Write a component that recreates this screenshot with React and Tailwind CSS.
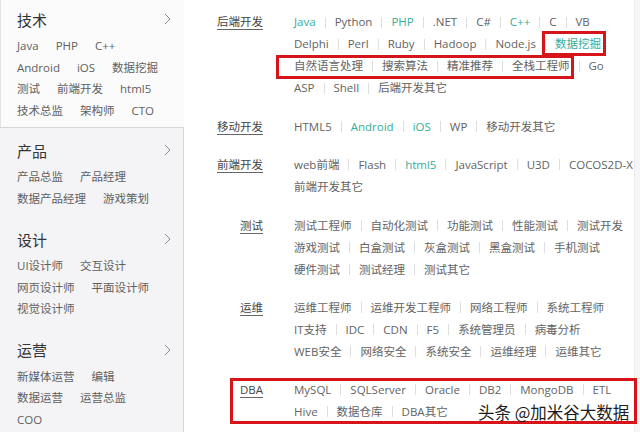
import React from "react";

const FONT = { fontFamily: "'Open Sans','Noto Sans CJK SC',sans-serif" };

const leftSections = [
  { title: "技术", rows: [["Java", "PHP", "C++"], ["Android", "iOS", "数据挖掘"], ["测试", "前端开发", "html5"], ["技术总监", "架构师", "CTO"]] },
  { title: "产品", rows: [["产品总监", "产品经理"], ["数据产品经理", "游戏策划"]] },
  { title: "设计", rows: [["UI设计师", "交互设计"], ["网页设计师", "平面设计师"], ["视觉设计师"]] },
  { title: "运营", rows: [["新媒体运营", "编辑"], ["数据运营", "运营总监"], ["COO"]] },
];

const T = (s) => [s, true];

const rightSections = [
  {
    label: "后端开发",
    rows: [
      [T("Java"), "Python", T("PHP"), ".NET", "C#", T("C++"), "C", "VB"],
      ["Delphi", "Perl", "Ruby", "Hadoop", "Node.js", T("数据挖掘")],
      ["自然语言处理", "搜索算法", "精准推荐", "全栈工程师", "Go"],
      ["ASP", "Shell", "后端开发其它"],
    ],
  },
  { label: "移动开发", rows: [["HTML5", T("Android"), T("iOS"), "WP", "移动开发其它"]] },
  {
    label: "前端开发",
    rows: [
      ["web前端", "Flash", T("html5"), "JavaScript", "U3D", "COCOS2D-X"],
      ["前端开发其它"],
    ],
  },
  {
    label: "测试",
    rows: [
      ["测试工程师", "自动化测试", "功能测试", "性能测试", "测试开发"],
      ["游戏测试", "白盒测试", "灰盒测试", "黑盒测试", "手机测试"],
      ["硬件测试", "测试经理", "测试其它"],
    ],
  },
  {
    label: "运维",
    rows: [
      ["运维工程师", "运维开发工程师", "网络工程师", "系统工程师"],
      ["IT支持", "IDC", "CDN", "F5", "系统管理员", "病毒分析"],
      ["WEB安全", "网络安全", "系统安全", "运维经理", "运维其它"],
    ],
  },
  {
    label: "DBA",
    rows: [
      ["MySQL", "SQLServer", "Oracle", "DB2", "MongoDB", "ETL"],
      ["Hive", "数据仓库", "DBA其它"],
    ],
  },
];

function Chevron() {
  return (
    <svg width="7" height="12" viewBox="0 0 7 12" className="shrink-0 -translate-y-[1px]">
      <polyline points="1,1 6,6 1,11" fill="none" stroke="#8a8a8a" strokeWidth="1" />
    </svg>
  );
}

function LeftSection({ title, rows }) {
  return (
    <div>
      <div className="flex h-6 items-center justify-between">
        <span className="text-[15px] text-[#333]">{title}</span>
        <Chevron />
      </div>
      <div className="mt-[3px]">
        {rows.map((r, i) => (
          <div key={i} className="flex h-[21.5px] items-center gap-[17px] whitespace-nowrap text-[11.5px] text-[#606060]">
            {r.map((t) => (
              <span key={t}>{t}</span>
            ))}
          </div>
        ))}
      </div>
    </div>
  );
}

function Row({ items }) {
  return (
    <div className="flex h-[22px] items-center whitespace-nowrap text-[11.5px]">
      {items.map((it, i) => {
        const [text, teal] = Array.isArray(it) ? it : [it, false];
        return (
          <React.Fragment key={i}>
            {i > 0 && <span className="mx-[9px] h-[11px] w-px bg-[#dedede]" />}
            <span className={teal ? "text-[#35ad9a]" : "text-[#636363]"}>{text}</span>
          </React.Fragment>
        );
      })}
    </div>
  );
}

export default function App() {
  return (
    <div className="relative flex h-[432px] w-[640px] overflow-hidden bg-white" style={FONT}>
      {/* left column */}
      <div className="flex w-[184px] shrink-0 flex-col">
        <div className="border-l border-[#e2e2e2] bg-[#fbfbfc] pb-[6px] pl-[16px] pr-[13px] pt-[8px]">
          <LeftSection {...leftSections[0]} />
        </div>
        <div className="flex flex-1 flex-col gap-[19px] border-r border-t border-[#d6d6d8] bg-[#f4f4f6] pl-[17px] pr-[12px] pt-[11px]">
          {leftSections.slice(1).map((s) => (
            <LeftSection key={s.title} {...s} />
          ))}
        </div>
      </div>

      {/* right panel */}
      <div className="flex flex-1 flex-col gap-[16.4px] border-r border-[#ececec] pt-[11px]">
        {rightSections.map((s) => (
          <div key={s.label} className="flex">
            <div className="flex h-[22px] w-[79px] shrink-0 items-center justify-end">
              <span className="text-[11.5px] text-[#444] underline underline-offset-[3px] decoration-[#666]">{s.label}</span>
            </div>
            <div className="ml-[31px]">
              {s.rows.map((r, i) => (
                <Row key={i} items={r} />
              ))}
            </div>
          </div>
        ))}
      </div>
      <div className="w-[5px] shrink-0 bg-[#f6f6f6]" />

      {/* annotation boxes */}
      <div className="pointer-events-none absolute left-[542px] top-[31px] h-[25px] w-[64px] border-[3px] border-[#d8141b]" />
      <div className="pointer-events-none absolute left-[276px] top-[55px] h-[24px] w-[298px] border-[3px] border-[#d8141b]" />
      <div className="pointer-events-none absolute left-[230px] top-[378px] h-[46px] w-[407px] border-[3px] border-[#d8141b]" />

      {/* watermark */}
      <div className="absolute left-[478px] top-[400px] whitespace-nowrap text-[16.5px] leading-[24px] text-[#1c1c1c]" style={{ fontFamily: "'Noto Sans CJK SC',sans-serif" }}>
        头条 @加米谷大数据
      </div>
    </div>
  );
}
